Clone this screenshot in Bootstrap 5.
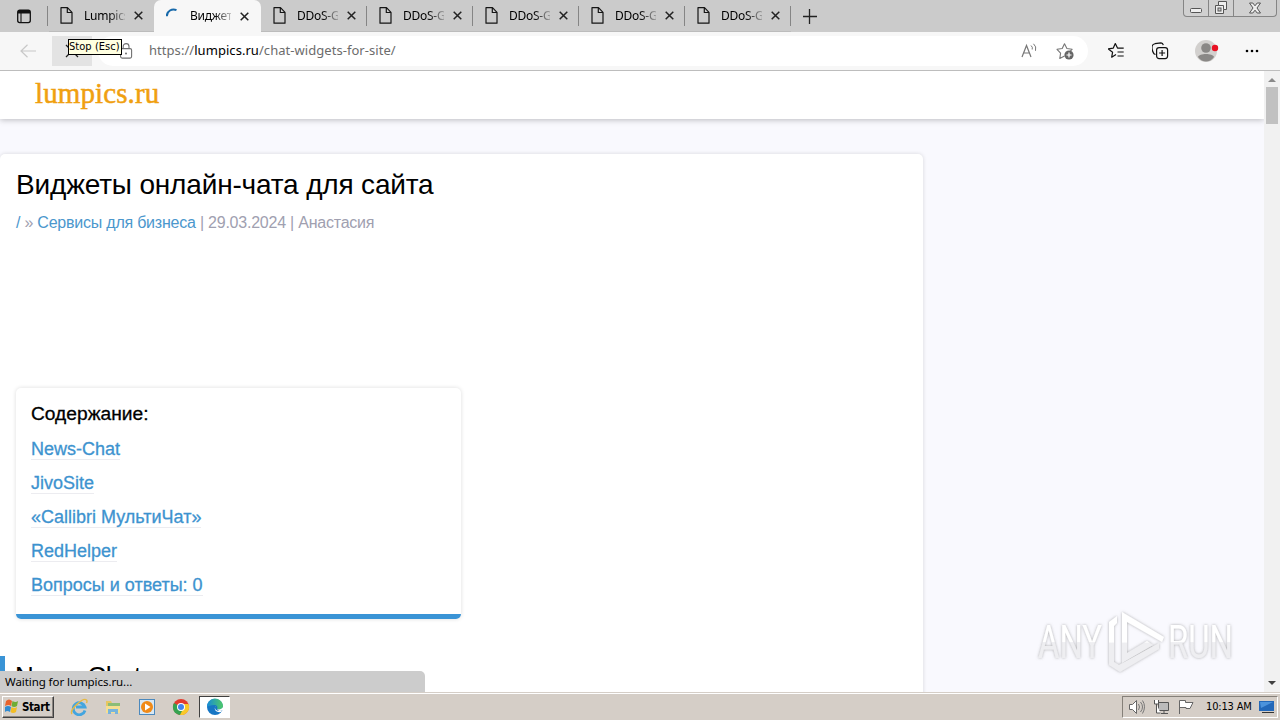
<!DOCTYPE html>
<html lang="ru">

<head>
    <meta charset="utf-8">
    <title>Виджеты онлайн-чата для сайта</title>
    <link rel="stylesheet" href="https://cdn.jsdelivr.net/npm/bootstrap@5.3.2/dist/css/bootstrap.min.css">
    <style>
        body { width: 1280px; height: 720px; font-family: "Liberation Sans", sans-serif; color: #000; background: #fff; }
        svg { display: block; flex: none; }
        .ui-font { font-family: "Noto Sans", sans-serif; }

        /* tab strip */
        .tab-strip { height: 32px; background: #cbcbcb; }
        .strip-start { width: 49px; padding-left: 16px; }
        .tab-item { width: 106px; height: 32px; padding-left: 12px; font-size: 12px; border-bottom: 1px solid #bcbcbc; }
        .tab-item::after { content: ""; width: 1px; height: 20px; background: #858585; margin-left: auto; }
        .tab-item.before-current::after, .tab-item.current::after { background: none; }
        .tab-item.before-current { padding-left: 11px; width: 105px; }
        .tab-item.current { background: #f7f7f7; border-radius: 7px 7px 0 0; border: 0; width: 107px; }
        .tab-text { width: 41px; margin-left: 11px; overflow: hidden; white-space: nowrap; line-height: 18px; letter-spacing: -.25px;
            -webkit-mask-image: linear-gradient(90deg, #000 60%, transparent 110%); }
        .tab-close { margin-left: 9px; }
        .strip-start::after { content: ""; width: 1px; height: 20px; background: #858585; margin: 0 1px 0 auto; }
        .win-buttons { width: 94px; height: 17px; margin-right: 3px; border: 1px solid #858585; border-top: 0; border-radius: 0 0 4px 4px; background: #d0d0d0; }
        .win-buttons > span { width: 25px; border-right: 1px solid #858585; }
        .win-buttons > span:last-child { width: auto; flex: 1; border: 0; }

        /* toolbar */
        .tool-bar { height: 39px; background: #f7f7f7; border-bottom: 1px solid #bdbdbd; }
        .stop-btn { width: 40px; height: 30px; background: #e3e3e3; margin-left: 16px; }
        .address { width: 990px; height: 30px; margin-left: 6px; padding-left: 20px; background: #fff; border-radius: 15px; }
        .url { margin-left: 15px; font-size: 13px; color: #6c6c6c; letter-spacing: .05px; white-space: nowrap; }
        .url b { font-weight: 400; color: #000; }
        .read-icon { margin-left: auto; }
        .star-icon { margin: 0 12px 0 18px; }
        .hint { left: 68px; top: 39px; width: 54px; height: 16px; border: 1px solid #000; background: #ffffe1;
            font: 11px/14px "DejaVu Sans Condensed", sans-serif; letter-spacing: .05px; white-space: nowrap; z-index: 5; }

        /* page */
        .view { height: 621px; }
        .page { width: 1264px; background: #f9f9fe; }
        .site-head { height: 48px; background: #fff; padding-left: 35px; box-shadow: 0 1px 6px rgba(0,0,0,.25); }
        .site-logo { font: 29px/44px "Liberation Serif", serif; color: #f0a010; letter-spacing: .1px; -webkit-text-stroke: .5px #f0a010; }
        .article { width: 923px; height: 560px; margin-top: 35px; padding: 14px 0 0 16px; background: #fff; border-radius: 5px; box-shadow: 0 0 4px rgba(0,0,0,.14); }
        .article h1 { font-size: 28px; line-height: 34px; margin: 0; font-weight: 400; letter-spacing: -.17px; white-space: nowrap; }
        .crumbs { font-size: 16px; line-height: 20px; margin-top: 11px; color: #a0a0b0; letter-spacing: -.225px; white-space: nowrap; }
        .crumbs a { color: #4b97cd; text-decoration: none; }
        .toc { width: 445px; height: 231px; margin-top: 155px; padding: 12px 15px; border-radius: 5px; border-bottom: 5px solid #3a94d6; box-shadow: 0 0 4px rgba(0,0,0,.14); font-size: 18px; line-height: 28px; -webkit-text-stroke: .3px; }
        .toc-title { height: 28px; font-size: 19.2px; line-height: 27px; }
        .toc ul { margin-top: 11px; }
        .toc li { height: 34px; line-height: 20px; }
        .toc a { display: inline-block; height: 21px; color: #3d93cf; text-decoration: none; border-bottom: 1px solid #ececf0; }
        .section-title { height: 40px; margin: 37px 0 0 -16px; padding-left: 10px; border-left: 5px solid #3a94d6; font-size: 26px; line-height: 40px; letter-spacing: -.3px; }
        .scroll-track { width: 16px; background: #f1f1f1; padding: 5px 2px; }
        .scroll-thumb { width: 12px; height: 37px; margin-top: 4px; background: #c1c1c1; }
        .status-bubble { left: 0; top: 671px; width: 425px; height: 21px; padding-left: 5px; background: #ccc; border-radius: 0 5px 0 0; font-size: 11.5px; line-height: 21px; letter-spacing: -.07px; }
        .watermark { left: 1030px; top: 600px; }

        /* taskbar */
        .task-bar { height: 28px; background: #d5cec7; border-top: 1px solid #d5cec7; box-shadow: inset 0 1px #fff; padding: 2px 2px 2px; }
        .start-btn { width: 52px; height: 22px; border: 1px solid; border-color: #fff #404040 #404040 #fff; box-shadow: inset -1px -1px #8b8580; font: bold 11.5px "DejaVu Sans Condensed", sans-serif; letter-spacing: -.4px; padding-left: 2px; }
        .quick { margin-left: 16px; gap: 16px; }
        .edge-btn { width: 31px; height: 22px; margin-left: 9px; background: #fff; border: 1px solid; border-color: #404040 #fff #fff #404040; }
        .tray { width: 156px; height: 22px; border: 1px solid; border-color: #858079 #fff #fff #858079; padding-left: 5px; }
        .clock { font: 11px "DejaVu Sans Condensed", sans-serif; letter-spacing: -.15px; margin: 0 7px 0 12px; white-space: nowrap; }
    </style>
</head>

<body class="overflow-hidden position-relative">
    <svg width="0" height="0" class="position-absolute">
        <symbol id="doc" viewBox="0 0 13 17"><path d="M1 .7h6.5l4.5 4.6v10.9H1zM7.3.7v4.8H12" fill="none" stroke="#151515" stroke-width="1.2" stroke-linejoin="round"/></symbol>
        <symbol id="cross" viewBox="0 0 9 9"><path d="M.7.7l7.6 7.6M8.3.7L.7 8.3" stroke="#222" stroke-width="1.5"/></symbol>
    </svg>

    <div class="tab-strip ui-font d-flex align-items-center">
        <div class="strip-start d-flex align-items-center">
            <svg width="16" height="15"><rect x="1.7" y="1.2" width="12.6" height="12.4" rx="2" fill="none" stroke="#111" stroke-width="1.3"/><path d="M2 1h12v3.5H2z" fill="#111"/><path d="M5 4v9" stroke="#111" stroke-width="1.1"/></svg>
        </div>
        <div class="tab-item before-current d-flex align-items-center">
            <svg width="13" height="17"><use href="#doc"/></svg><span class="tab-text">Lumpics</span><svg class="tab-close" width="9" height="9"><use href="#cross"/></svg>
        </div>
        <div class="tab-item current d-flex align-items-center">
            <svg width="13" height="17"><path d="M.8 7.8A6.8 6.8 0 0 1 10.5 1.6" transform="translate(0 .5)" fill="none" stroke="#1769aa" stroke-width="2"/></svg><span class="tab-text">Виджеты</span><svg class="tab-close" width="9" height="9"><use href="#cross"/></svg>
        </div>
        <div class="tab-item d-flex align-items-center">
            <svg width="13" height="17"><use href="#doc"/></svg><span class="tab-text">DDoS-Guard</span><svg class="tab-close" width="9" height="9"><use href="#cross"/></svg>
        </div>
        <div class="tab-item d-flex align-items-center">
            <svg width="13" height="17"><use href="#doc"/></svg><span class="tab-text">DDoS-Guard</span><svg class="tab-close" width="9" height="9"><use href="#cross"/></svg>
        </div>
        <div class="tab-item d-flex align-items-center">
            <svg width="13" height="17"><use href="#doc"/></svg><span class="tab-text">DDoS-Guard</span><svg class="tab-close" width="9" height="9"><use href="#cross"/></svg>
        </div>
        <div class="tab-item d-flex align-items-center">
            <svg width="13" height="17"><use href="#doc"/></svg><span class="tab-text">DDoS-Guard</span><svg class="tab-close" width="9" height="9"><use href="#cross"/></svg>
        </div>
        <div class="tab-item d-flex align-items-center">
            <svg width="13" height="17"><use href="#doc"/></svg><span class="tab-text">DDoS-Guard</span><svg class="tab-close" width="9" height="9"><use href="#cross"/></svg>
        </div>
        <svg class="ms-2 ps-1" width="19" height="15"><path d="M6.500 0v15M-1 7.500h15" stroke="#222" stroke-width="1.300"/></svg>
        <div class="win-buttons d-flex ms-auto align-self-start">
            <span class="d-flex align-items-center justify-content-center"><svg width="12" height="5" class="mt-1"><rect x=".5" y=".5" width="11" height="4" rx="1" fill="#eee" stroke="#555"/></svg></span>
            <span class="d-flex align-items-center justify-content-center"><svg width="14" height="14"><path d="M4.500 .500h8v8h-3v4h-8v-8h3z" fill="#eee" stroke="#555"/><path d="M4.500 4.500h5v4" fill="none" stroke="#555"/><rect x="4" y="7" width="3" height="3" fill="#ccc" stroke="#555"/></svg></span>
            <span class="d-flex align-items-center justify-content-center"><svg width="12" height="12"><path d="M.5 1h3.300L6 3.800 8.200 1h3.300L8 6l3.500 5H8.200L6 8.200 3.800 11H.5L4 6z" fill="#eee" stroke="#555"/></svg></span>
        </div>
    </div>

    <div class="tool-bar ui-font d-flex align-items-center">
        <svg class="ms-3 ps-1" width="20" height="14"><path d="M16 7H1M7.500 .8L1 7l6.500 6.200" fill="none" stroke="#c8c8c8" stroke-width="1.200"/></svg>
        <div class="stop-btn d-flex align-items-center justify-content-center"><svg width="14" height="14"><path d="M1 1l12 12M13 1L1 13" stroke="#222" stroke-width="1.300"/></svg></div>
        <div class="address d-flex align-items-center">
            <svg width="16" height="16"><rect x="2.600" y="5.600" width="11" height="9.500" rx="1.500" fill="none" stroke="#707070" stroke-width="1.100"/><path d="M5.200 5.500V3.500a2.900 2.900 0 0 1 5.800 0v2" fill="none" stroke="#707070" stroke-width="1.100"/><circle cx="8" cy="10.400" r="1" fill="#707070"/></svg>
            <span class="url">https://<b>lumpics.ru</b>/chat-widgets-for-site/</span>
            <svg class="read-icon" width="17" height="16"><path d="M1 14L5.500 2.500 10 14M2.800 10h5.600" fill="none" stroke="#777" stroke-width="1.200"/><path d="M10 2.500q2 1.500 1.200 4M12.500 .8q3.300 2.700 2 7" fill="none" stroke="#777"/></svg>
            <svg class="star-icon" width="20" height="18"><path d="M8.500 14l-4.700 2.500.8-5.300L1 7.300l5.200-.8L8.500 1.700l2.400 4.800 5.200.8-2 2" fill="none" stroke="#777" stroke-width="1.100" stroke-linejoin="round"/><circle cx="13" cy="13" r="4.600" fill="#666"/><path d="M10.500 13h5M13 10.500v5" stroke="#fff" stroke-width="1.200"/></svg>
        </div>
        <svg class="ms-3 ps-1" width="24" height="18"><path d="M8 12.500l-4.300 2.700.9-5L.3 6.900l5-.8L7.300 1.500l2.200 4.600h6.200M9.500 10h6.200M9.500 14h6.200" fill="none" stroke="#111" stroke-width="1.200" stroke-linejoin="round"/></svg>
        <svg class="ms-4" width="18" height="18"><path d="M3.500 12.500L2 11.800C0 9-.5 5 .5 3.300 1 2.300 2 2 3 1.700l6-.8c1.200 0 2 .7 2.300 2.200" fill="none" stroke="#111" stroke-width="1.200"/><rect x="4.600" y="5.600" width="11" height="11" rx="2.500" fill="none" stroke="#111" stroke-width="1.200"/><path d="M10.100 8v6M7.100 11h6" stroke="#111" stroke-width="1.200"/></svg>
        <svg class="ms-4" width="26" height="24"><circle cx="12" cy="12" r="11" fill="#d2d0ce"/><circle cx="12" cy="9" r="4.800" fill="#8a8886"/><path d="M4 18c1-4 15-4 16 0-4 6-12 6-16 0z" fill="#8a8886"/><circle cx="21" cy="9" r="3.200" fill="#e81123"/></svg>
        <svg class="ms-4" width="16" height="4"><circle cx="3" cy="2" r="1.300"/><circle cx="8" cy="2" r="1.300"/><circle cx="13" cy="2" r="1.300"/></svg>
    </div>
    <div class="hint position-absolute">Stop (Esc)</div>

    <div class="view d-flex overflow-hidden">
        <main class="page overflow-hidden">
            <header class="site-head"><span class="site-logo">lumpics.ru</span></header>
            <article class="article">
                <h1>Виджеты онлайн-чата для сайта</h1>
                <div class="crumbs"><a href="#">/</a> » <a href="#">Сервисы для бизнеса</a> | 29.03.2024 | Анастасия</div>
                <nav class="toc">
                    <div class="toc-title">Содержание:</div>
                    <ul class="list-unstyled mb-0">
                        <li><a href="#">News-Chat</a></li>
                        <li><a href="#">JivoSite</a></li>
                        <li><a href="#">«Callibri МультиЧат»</a></li>
                        <li><a href="#">RedHelper</a></li>
                        <li><a href="#">Вопросы и ответы: 0</a></li>
                    </ul>
                </nav>
                <h2 class="section-title">News-Chat</h2>
            </article>
        </main>
        <div class="scroll-track d-flex flex-column align-items-center">
            <svg width="8" height="7"><path d="M0 6l4-4 4 4z" fill="#8a8a8a"/></svg>
            <div class="scroll-thumb"></div>
            <svg class="mt-auto" width="8" height="8"><path d="M0 2h8L4 6z" fill="#404040"/></svg>
        </div>
    </div>
    <div class="status-bubble ui-font position-absolute">Waiting for lumpics.ru...</div>

    <svg class="watermark position-absolute" width="210" height="84">
        <defs>
            <linearGradient id="fade" x1="0" y1="0" x2="0" y2="1"><stop offset=".5" stop-color="#fff"/><stop offset=".52" stop-color="#eeeef1"/></linearGradient>
            <filter id="glow" x="-10%" y="-20%" width="120%" height="140%"><feDropShadow dx="0" dy="0" stdDeviation="1.500" flood-color="#777" flood-opacity=".6"/></filter>
        </defs>
        <g filter="url(#glow)" fill="url(#fade)" font-family="Roboto, sans-serif" font-size="47">
            <text x="8" y="58" textLength="64" lengthAdjust="spacingAndGlyphs">ANY</text>
            <text x="138" y="58" textLength="65" lengthAdjust="spacingAndGlyphs">RUN</text>
            <path d="M92 12L134 37 132 42 97 22v31l20-12 6 4-31 18zM79 22l8-6v7l-3 3v36l5 3 40-22v6L90 72 79 65z"/>
        </g>
    </svg>

    <div class="task-bar d-flex align-items-center">
        <div class="start-btn d-flex align-items-center">
            <svg class="me-1" width="13" height="15"><path d="M1 2q3-3 6 0L6 7Q4 5 0 7z" fill="#e8632c"/><path d="M7.500 2q3 2 5.500 0l-1 5q-3 2-5.500 0z" fill="#70ad35"/><path d="M0 8q3-2 6 0l-1 5q-3-2-5 0z" fill="#318bd1"/><path d="M6.500 8q3 2 5.500 0l-1 5q-3 2-5.500 0z" fill="#f3bd25"/></svg>Start
        </div>
        <div class="quick d-flex align-items-center">
            <svg width="18" height="18"><path d="M15 12.500A6 6 0 1 1 15 9H6" fill="none" stroke="#43a5df" stroke-width="2.800"/><path d="M2 16C-1 12 13-1 16.500 2c1 1 .5 2 0 3" fill="none" stroke="#e6b944" stroke-width="1.400"/></svg>
            <svg width="18" height="18"><path d="M2 3h5l1 2h7v10H2z" fill="#e7c760"/><path d="M4 5h12v4H4z" fill="#8bbd77"/><path d="M2 8h14v7H2z" fill="#f5df91"/><path d="M4 16v-5h10v5h-3v-2H7v2z" fill="#77b4dc"/></svg>
            <svg width="18" height="18"><rect x="1.500" y="1.500" width="15" height="15" fill="#d8e8f4" stroke="#4c89bd"/><circle cx="9" cy="9" r="6" fill="#f08a18"/><path d="M7 5.500L12.500 9 7 12.500z" fill="#fff"/></svg>
            <svg width="18" height="18"><circle cx="9" cy="9" r="8" fill="#e33b2e"/><path d="M9 9L2 5a8 8 0 0 0 6 12l4-6z" fill="#35a351"/><path d="M9 9h3l-4 8A8 8 0 0 0 16.500 6H9z" fill="#f9c929"/><circle cx="9" cy="9" r="4" fill="#fff"/><circle cx="9" cy="9" r="3" fill="#4384ed"/></svg>
        </div>
        <div class="edge-btn d-flex align-items-center justify-content-center">
            <svg width="18" height="18"><defs><linearGradient id="edge"><stop stop-color="#168bd8"/><stop offset="1" stop-color="#50ca66"/></linearGradient></defs><circle cx="9" cy="9" r="8" fill="#1676c4"/><path d="M1 9a8 8 0 0 1 16-1c0 3-3 4-6 3 1-2 0-4-3-4S2 8 1 9z" fill="url(#edge)"/><path d="M10 8c-2 1-1 5 3 5l3-.5-1 1.500c-5 1-8-3-5-6zM11 11c2 1 5 0 6-2v3l-4 1z" fill="#fff"/></svg>
        </div>
        <div class="tray d-flex align-items-center ms-auto">
            <svg width="18" height="16"><path d="M1.500 5.500h3l4-4v13l-4-4h-3z" fill="#fff" stroke="#666"/><path d="M10.500 5q2 3 0 6M12.500 3q4 5 0 10M14.500 1.500q4 6 0 13" fill="none" stroke="#777"/></svg>
            <svg class="ms-2" width="16" height="16"><path d="M4.500 3.500h10v8h-10zM7 14.500h7M10 11v4" fill="#bbb" stroke="#555"/><path d="M.5 1v4h4V1M2.500 5v9h4" fill="#fff" stroke="#555"/></svg>
            <svg class="ms-2" width="16" height="16"><path d="M1.500 15V1.500h6v2h7.500l-3 6H8v-1H1.500" fill="#fff" stroke="#666"/></svg>
            <span class="clock">10:13 AM</span>
            <svg width="16" height="14"><path d="M0 1h15v10H0z" fill="#2368b9"/><path d="M1 2h13L2 8z" fill="#4c93dc"/><path d="M3 12h12v1H3z" fill="#333"/></svg>
        </div>
    </div>

    <script src="https://cdn.jsdelivr.net/npm/bootstrap@5.3.2/dist/js/bootstrap.bundle.min.js"></script>
</body>

</html>
